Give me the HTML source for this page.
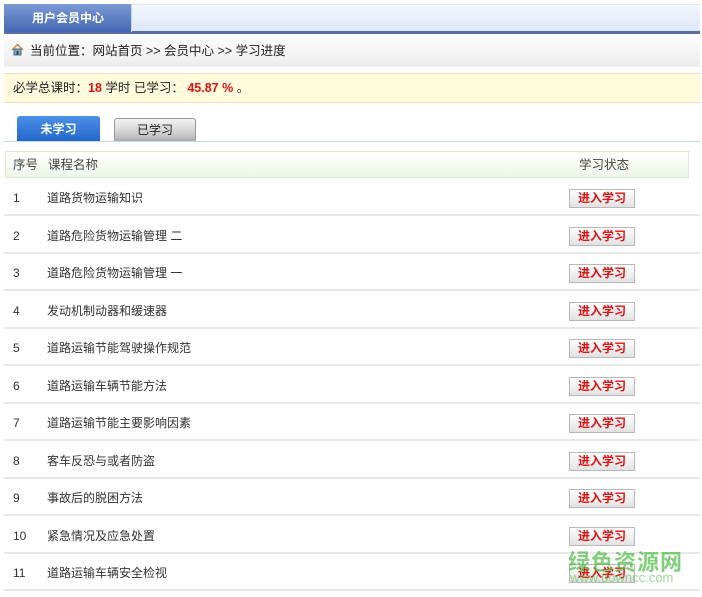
<!DOCTYPE html>
<html><head><meta charset="utf-8"><style>
*{margin:0;padding:0;box-sizing:border-box}
body{width:702px;height:597px;background:#fff;font-family:"Liberation Sans","Noto Sans CJK SC",sans-serif;font-size:12px;color:#333;position:relative;overflow:hidden}
.a{position:absolute}
.topbar{left:4px;top:4px;width:696px;height:28px;background:linear-gradient(#f4f8fe,#dbe6f8);border-top:1px solid #e3e8f0}
.line{left:4px;top:31px;width:696px;height:3px;background:#5a6f9e}
.tab{left:4px;top:4px;width:128px;height:28px;background:linear-gradient(#7b9ad6,#4468b2);color:#fff;font-weight:bold;font-size:12px;line-height:28px;padding-left:28px;border-right:1px solid #c8d4ea}
.bc{left:4px;top:34px;width:696px;height:33px;background:linear-gradient(#fff,#ececec);line-height:34px;padding-left:26px;font-size:12.5px;color:#222}
.yel{left:4px;top:73px;width:696px;height:30px;background:#fffbdc;border-top:1px solid #f0e4bc;border-bottom:1px solid #f0e4bc;line-height:29px;padding-left:9px;font-size:12.5px;color:#222}
.red{color:#e01010;font-weight:bold}
.t1{left:17px;top:116px;width:83px;height:26px;background:linear-gradient(#4c8fe6,#2266cc);border-radius:3px 3px 0 0;color:#fff;font-weight:bold;text-align:center;line-height:26px}
.t2{left:114px;top:118px;width:82px;height:24px;background:linear-gradient(#f4f4f4,#c8c8c8 70%,#a8a8a8);border:1px solid #999;border-bottom:none;border-radius:3px 3px 0 0;color:#222;text-align:center;line-height:23px}
.tl{left:4px;top:141px;width:696px;height:1px;background:#c6d6ea}
.hd{left:5px;top:151px;width:684px;height:27px;background:linear-gradient(#fff,#eef6e8);border:1px solid #dfe6da;line-height:26px;color:#444;font-size:12.5px}
.row{left:4px;width:696px;height:37px;border-bottom:2px solid #e8e8e8;line-height:39px;color:#333}
.btn{position:absolute;left:565px;top:10px;width:66px;height:19px;background:linear-gradient(#fff,#e2e2e2);border:1px solid #b8b8b8;color:#e01010;font-weight:bold;text-align:center;line-height:17px;font-size:12px}
.wm{left:568px;top:545px;color:rgba(90,190,80,.75);font-size:22px;font-weight:bold;letter-spacing:1px}
.wm2{left:570px;top:570px;color:rgba(90,190,80,.6);font-size:13px}
</style></head><body>
<div class="a topbar"></div><div class="a line"></div>
<div class="a tab">用户会员中心</div>
<div class="a bc">当前位置：网站首页 &gt;&gt; 会员中心 &gt;&gt; 学习进度</div>
<svg class="a" style="left:11px;top:43px" width="13" height="13" viewBox="0 0 13 13"><path d="M1 7L6.5 1.5 12 7" fill="none" stroke="#c84" stroke-width="1.5"/><rect x="3" y="6" width="7" height="6" fill="#7ab" stroke="#567"/><rect x="5.5" y="8" width="2" height="4" fill="#345"/></svg>
<div class="a yel">必学总课时：<span class="red">18</span> 学时 已学习： <span class="red">45.87 %</span> 。</div>
<div class="a t1">未学习</div><div class="a t2">已学习</div><div class="a tl"></div>
<div class="a hd"><span style="position:absolute;left:7px">序号</span><span style="position:absolute;left:42px">课程名称</span><span style="position:absolute;left:573px">学习状态</span></div>
<div class="a row" style="top:179px"><span class="a" style="left:9px">1</span><span class="a" style="left:43px">道路货物运输知识</span><span class="btn">进入学习</span></div>
<div class="a row" style="top:216.5px"><span class="a" style="left:9px">2</span><span class="a" style="left:43px">道路危险货物运输管理 二</span><span class="btn">进入学习</span></div>
<div class="a row" style="top:254px"><span class="a" style="left:9px">3</span><span class="a" style="left:43px">道路危险货物运输管理 一</span><span class="btn">进入学习</span></div>
<div class="a row" style="top:291.5px"><span class="a" style="left:9px">4</span><span class="a" style="left:43px">发动机制动器和缓速器</span><span class="btn">进入学习</span></div>
<div class="a row" style="top:329px"><span class="a" style="left:9px">5</span><span class="a" style="left:43px">道路运输节能驾驶操作规范</span><span class="btn">进入学习</span></div>
<div class="a row" style="top:366.5px"><span class="a" style="left:9px">6</span><span class="a" style="left:43px">道路运输车辆节能方法</span><span class="btn">进入学习</span></div>
<div class="a row" style="top:404px"><span class="a" style="left:9px">7</span><span class="a" style="left:43px">道路运输节能主要影响因素</span><span class="btn">进入学习</span></div>
<div class="a row" style="top:441.5px"><span class="a" style="left:9px">8</span><span class="a" style="left:43px">客车反恐与或者防盗</span><span class="btn">进入学习</span></div>
<div class="a row" style="top:479px"><span class="a" style="left:9px">9</span><span class="a" style="left:43px">事故后的脱困方法</span><span class="btn">进入学习</span></div>
<div class="a row" style="top:516.5px"><span class="a" style="left:9px">10</span><span class="a" style="left:43px">紧急情况及应急处置</span><span class="btn">进入学习</span></div>
<div class="a row" style="top:554px"><span class="a" style="left:9px">11</span><span class="a" style="left:43px">道路运输车辆安全检视</span><span class="btn">进入学习</span></div>
<div class="a wm">绿色资源网</div><div class="a wm2">www.downcc.com</div>
</body></html>
